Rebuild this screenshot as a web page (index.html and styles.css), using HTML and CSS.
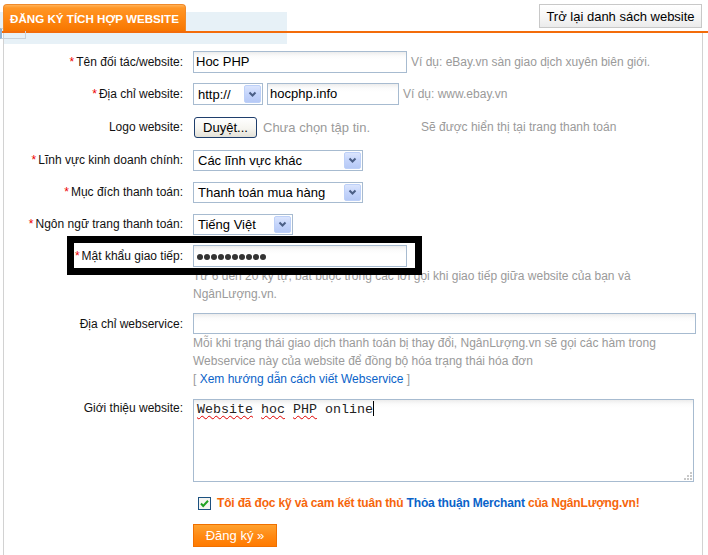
FILE: index.html
```html
<!DOCTYPE html>
<html lang="vi">
<head>
<meta charset="utf-8">
<title>Đăng ký tích hợp website</title>
<link rel="stylesheet" href="styles.css">
</head>
<body>
<div class="page">
  <div class="tabbar">
    <span class="corner-box"></span>
    <div class="tab">ĐĂNG KÝ TÍCH HỢP WEBSITE</div>
    <button class="back-btn" type="button">Trở lại danh sách website</button>
  </div>
  <div class="content">
    <div class="band"></div>
    <div class="form">
      <div class="lbl"><span class="req">*</span>Tên đối tác/website:</div>
      <div class="field">
        <div class="input w-name">Hoc PHP</div>
        <span class="hint">Ví dụ: eBay.vn sàn giao dịch xuyên biên giới.</span>
      </div>

      <div class="lbl"><span class="req">*</span>Địa chỉ website:</div>
      <div class="field">
        <div class="select w-http tall">
          <span class="sel-text">http://</span>
          <span class="sel-btn"><svg width="9" height="7" viewBox="0 0 9 7"><polyline points="1.5,1.5 4.5,4.5 7.5,1.5" fill="none" stroke="#4b5f86" stroke-width="2"/></svg></span>
        </div>
        <div class="input w-url">hocphp.info</div>
        <span class="hint">Ví dụ: www.ebay.vn</span>
      </div>

      <div class="lbl row-file">Logo website:</div>
      <div class="field row-file">
        <button class="file-btn" type="button">Duyệt...</button>
        <span class="file-note">Chưa chọn tập tin.</span>
        <span class="hint hint-logo">Sẽ được hiển thị tại trang thanh toán</span>
      </div>

      <div class="lbl"><span class="req">*</span>Lĩnh vực kinh doanh chính:</div>
      <div class="field">
        <div class="select w-sel">
          <span class="sel-text">Các lĩnh vực khác</span>
          <span class="sel-btn"><svg width="9" height="7" viewBox="0 0 9 7"><polyline points="1.5,1.5 4.5,4.5 7.5,1.5" fill="none" stroke="#4b5f86" stroke-width="2"/></svg></span>
        </div>
      </div>

      <div class="lbl"><span class="req">*</span>Mục đích thanh toán:</div>
      <div class="field">
        <div class="select w-sel">
          <span class="sel-text">Thanh toán mua hàng</span>
          <span class="sel-btn"><svg width="9" height="7" viewBox="0 0 9 7"><polyline points="1.5,1.5 4.5,4.5 7.5,1.5" fill="none" stroke="#4b5f86" stroke-width="2"/></svg></span>
        </div>
      </div>

      <div class="lbl"><span class="req">*</span>Ngôn ngữ trang thanh toán:</div>
      <div class="field">
        <div class="select w-lang">
          <span class="sel-text">Tiếng Việt</span>
          <span class="sel-btn"><svg width="9" height="7" viewBox="0 0 9 7"><polyline points="1.5,1.5 4.5,4.5 7.5,1.5" fill="none" stroke="#4b5f86" stroke-width="2"/></svg></span>
        </div>
      </div>

      <div class="lbl pw-label"><span class="highlight"></span><span class="req">*</span>Mật khẩu giao tiếp:</div>
      <div class="field stack">
        <div class="input w-name pw"><span class="dot"></span><span class="dot"></span><span class="dot"></span><span class="dot"></span><span class="dot"></span><span class="dot"></span><span class="dot"></span><span class="dot"></span><span class="dot"></span><span class="dot"></span></div>
        <div class="hint block">Từ 6 đến 20 ký tự, bắt buộc trong các lời gọi khi giao tiếp giữa website của bạn và<br>NgânLượng.vn.</div>
      </div>

      <div class="lbl">Địa chỉ webservice:</div>
      <div class="field stack">
        <div class="input w-ws"></div>
        <div class="hint block ws-hint">Mỗi khi trạng thái giao dịch thanh toán bị thay đổi, NgânLượng.vn sẽ gọi các hàm trong<br>Webservice này của website để đồng bộ hóa trạng thái hóa đơn<br><span class="bracket">[</span> <a class="link" href="#">Xem hướng dẫn cách viết Webservice</a> <span class="bracket">]</span></div>
      </div>

      <div class="lbl top">Giới thiệu website:</div>
      <div class="field stack">
        <div class="textarea"><span class="typo">Website</span> <span class="typo">hoc</span> <span class="typo">PHP</span> online<span class="caret"></span>
          <svg class="grip" width="9" height="9" viewBox="0 0 9 9"><rect x="7" y="1" width="2" height="2" fill="#c8c8c8"/><rect x="4" y="4" width="2" height="2" fill="#c8c8c8"/><rect x="7" y="4" width="2" height="2" fill="#c8c8c8"/><rect x="1" y="7" width="2" height="2" fill="#c8c8c8"/><rect x="4" y="7" width="2" height="2" fill="#c8c8c8"/><rect x="7" y="7" width="2" height="2" fill="#c8c8c8"/></svg>
        </div>
      </div>

      <div class="field span2 agree">
        <span class="checkbox"><svg width="13" height="13" viewBox="0 0 13 13"><rect x="0.5" y="0.5" width="12" height="12" fill="#f4f4f0" stroke="#1c5180"/><polyline points="3,6.5 5.2,9 10,3.8" fill="none" stroke="#21a121" stroke-width="2"/></svg></span>
        <span class="agree-text">Tôi đã đọc kỹ và cam kết tuân thủ <a class="agree-link" href="#">Thỏa thuận Merchant</a> của NgânLượng.vn!</span>
      </div>

      <div class="field span2">
        <button class="submit" type="button">Đăng ký »</button>
      </div>
    </div>
  </div>
</div>
</body>
</html>
```

FILE: styles.css
```css
* { box-sizing: border-box; }

html, body {
  margin: 0;
  padding: 0;
  background: #fff;
}

body {
  font-family: "Liberation Sans", Arial, sans-serif;
  font-size: 12px;
  color: #000;
  width: 708px;
  height: 555px;
  overflow: hidden;
}

.page {
  width: 708px;
}

/* ---------- header / tab bar ---------- */
.tabbar {
  position: relative;
  height: 33px;
  display: flex;
  align-items: flex-end;
  justify-content: space-between;
  padding: 0 6px 0 3px;
  border-bottom: 2px solid #f36c0a;
  background: linear-gradient(to bottom, #fff 12px, #e7f1f7 12px) left top / 287px 100% no-repeat;
}

.corner-box {
  position: absolute;
  left: 0;
  top: 28px;
  width: 26px;
  height: 11px;
  border: 1px solid #c9d1d9;
  border-left: 2px solid #8fb3d6;
}

.tab {
  position: relative;
  width: 183px;
  height: 27px;
  border: 1px solid #f08a2a;
  border-bottom: none;
  border-radius: 4px 4px 0 0;
  background: linear-gradient(to bottom, #ffb257 0, #ff9626 3px, #ff8a15 45%, #f77600 100%);
  color: #fff;
  font-weight: bold;
  font-size: 11.6px;
  line-height: 27px;
  text-align: center;
  white-space: nowrap;
}

.back-btn {
  align-self: flex-start;
  margin-top: 4px;
  width: 163px;
  height: 24px;
  padding: 0;
  border: 1px solid #c8c8c8;
  background: linear-gradient(to bottom, #fff 0, #f7f7f7 50%, #ebebeb 100%);
  font-family: "Liberation Sans", Arial, sans-serif;
  font-size: 13px;
  color: #000;
  cursor: pointer;
}

/* ---------- content ---------- */
.content {
  margin-left: 3px;
  width: 700px;
  height: 522px;
  border-left: 1px solid #d2d2d2;
  border-right: 1px solid #d2d2d2;
}

.band {
  width: 283px;
  height: 11px;
  background: #e7f1f7;
}

.form {
  display: grid;
  grid-template-columns: 179px 1fr;
  column-gap: 10px;
  row-gap: 10px;
  padding-top: 7px;
}

.lbl {
  position: relative;
  text-align: right;
  line-height: 22px;
  white-space: nowrap;
  color: #111;
}

.lbl.row-file { line-height: 24px; }
.lbl.top { line-height: 18px; }

.req {
  color: #e00;
  margin-right: 2px;
}

.field {
  display: flex;
  align-items: center;
  min-height: 22px;
  gap: 4px;
}

.field.row-file { min-height: 24px; }

.field.stack {
  flex-direction: column;
  align-items: flex-start;
  gap: 0;
}

.span2 { grid-column: 2; }

.hint {
  color: #9a9a9a;
  white-space: nowrap;
}

.hint.block {
  line-height: 18px;
}

.ws-hint { margin-bottom: 1px; }

.hint-logo { margin-left: 47px; }

.bracket { color: #9a9a9a; }

.link {
  color: #0a63c9;
  text-decoration: none;
}

/* inputs */
.input {
  height: 22px;
  border: 1px solid #a7bbd0;
  background: linear-gradient(to bottom, #ececec 0, #fbfbfb 4px, #fff 8px);
  font-size: 13px;
  line-height: 20px;
  padding-left: 2px;
  white-space: nowrap;
  overflow: hidden;
}

.w-name { width: 214px; }
.w-url { width: 132px; }
.w-ws { width: 503px; height: 21px; }

.pw {
  display: flex;
  align-items: center;
  gap: 1px;
  padding-left: 3px;
  padding-top: 1px;
}

.dot {
  width: 6px;
  height: 6px;
  border-radius: 50%;
  background: #333;
}

/* selects */
.select {
  display: flex;
  align-items: center;
  height: 21px;
  border: 1px solid #a7bbd0;
  background: #fff;
}

.select.tall { height: 22px; }

.w-http { width: 70px; }
.w-sel { width: 170px; }
.w-lang { width: 100px; }

.sel-text {
  flex: 1;
  padding-left: 4px;
  font-size: 13px;
  white-space: nowrap;
  overflow: hidden;
}

.sel-btn {
  width: 17px;
  height: calc(100% - 2px);
  margin-right: 1px;
  display: flex;
  align-items: center;
  justify-content: center;
  border: 1px solid #bdd0f8;
  border-radius: 2px;
  background: linear-gradient(to bottom, #dbe5fd 0, #c4d4fb 50%, #b6c9f6 100%);
}

/* file button */
.file-btn {
  margin-left: 1px;
  width: 63px;
  height: 21px;
  padding: 0;
  border: 1px solid #1f3e6c;
  border-radius: 3px;
  background: linear-gradient(to bottom, #fff 0, #f6f5f0 55%, #e3e1d7 100%);
  font-family: "Liberation Sans", Arial, sans-serif;
  font-size: 13px;
  color: #000;
}

.file-note {
  margin-left: 2px;
  color: #9a9a9a;
  font-size: 13px;
  white-space: nowrap;
}

/* highlight overlay around password row */
.highlight {
  position: absolute;
  left: 63px;
  top: -9px;
  width: 355px;
  height: 39px;
  border: 7px solid #000;
  z-index: 2;
  pointer-events: none;
}

/* textarea */
.textarea {
  position: relative;
  width: 501px;
  height: 83px;
  border: 1px solid #a7bbd0;
  background: linear-gradient(to bottom, #ececec 0, #fbfbfb 4px, #fff 8px);
  font-family: "Liberation Mono", "Courier New", monospace;
  font-size: 13.33px;
  line-height: 16px;
  padding: 1px 3px;
  white-space: pre;
  color: #222;
}

.typo {
  text-decoration: underline wavy #e00000;
  text-decoration-thickness: 1px;
  text-underline-offset: 2px;
}

.caret {
  display: inline-block;
  width: 1px;
  height: 15px;
  background: #000;
  vertical-align: -3px;
}

.grip {
  position: absolute;
  right: 1px;
  bottom: 1px;
}

/* agreement */
.agree {
  padding-left: 5px;
  gap: 6px;
}

.checkbox {
  display: flex;
  width: 13px;
  height: 13px;
}

.agree-text {
  font-weight: bold;
  color: #f6660b;
  white-space: nowrap;
  letter-spacing: -0.17px;
}

.agree-link {
  color: #0a63c9;
  text-decoration: none;
}

/* submit */
.submit {
  width: 84px;
  height: 23px;
  padding: 0;
  border: 1px solid #f07000;
  background: linear-gradient(to bottom, #ffa230 0, #ff8a14 50%, #ff7a00 100%);
  color: #fff;
  font-family: "Liberation Sans", Arial, sans-serif;
  font-size: 13px;
  cursor: pointer;
}
```
